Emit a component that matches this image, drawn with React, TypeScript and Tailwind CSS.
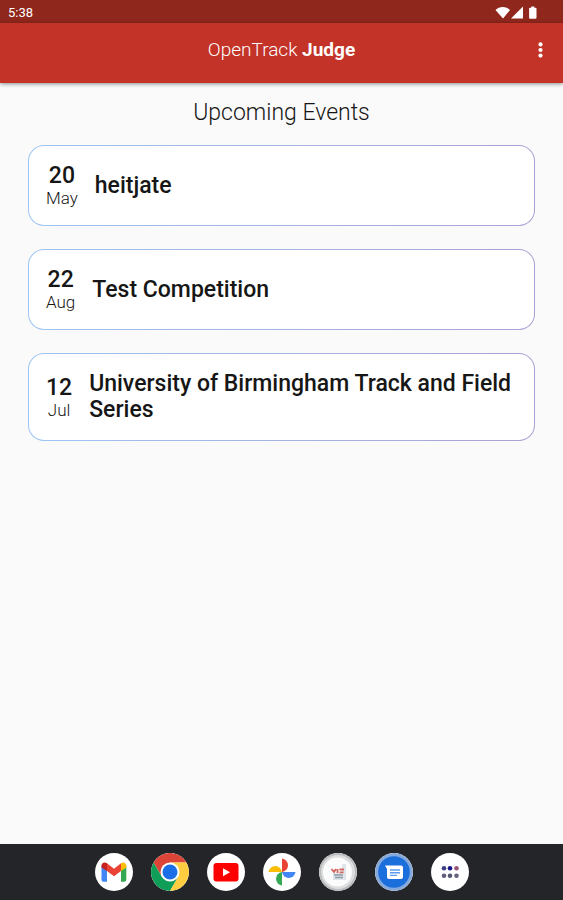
import React from "react";

type EventItem = {
  day: string;
  month: string;
  name: string;
};

const events: EventItem[] = [
  { day: "20", month: "May", name: "heitjate" },
  { day: "22", month: "Aug", name: "Test Competition" },
  { day: "12", month: "Jul", name: "University of Birmingham Track and Field Series" },
];

const StatusBar: React.FC = () => {
  return (
    <div className="flex h-[23px] items-center justify-between bg-[#8f271c] pt-0.5 pr-6 pl-2 text-white">
      <span className="text-[13px]">5:38</span>
      <svg width="44" height="14" viewBox="0 0 44 14" fill="currentColor" aria-hidden="true">
        <path d="M.5 4C4.3 0 11.2 0 15 4L8 12.5Z" />
        <path d="M28 .5V12.5H16Z" />
        <path d="M36.3 .5h3v1.2h1.3c.5 0 .9.4.9.9v9.2c0 .5-.4.9-.9.9H35c-.5 0-.9-.4-.9-.9V2.6c0-.5.4-.9.9-.9h1.3z" />
      </svg>
    </div>
  );
};

const Header: React.FC = () => {
  return (
    <header className="relative z-10 flex h-[60px] items-center justify-center bg-[#c33327] pb-1.5 text-white shadow-[0_1px_4px_rgba(0,0,0,0.45)]">
      <h1 className="text-[19px] font-light">
        OpenTrack <b className="font-bold">Judge</b>
      </h1>
      <button type="button" aria-label="More options" className="absolute right-4 cursor-pointer p-1">
        <svg width="5" height="16" viewBox="0 0 5 16" fill="currentColor">
          <circle cx="2.5" cy="2.4" r="2.1" />
          <circle cx="2.5" cy="8" r="2.1" />
          <circle cx="2.5" cy="13.6" r="2.1" />
        </svg>
      </button>
    </header>
  );
};

const EventCard: React.FC<{ event: EventItem }> = ({ event }) => {
  return (
    <li className="rounded-2xl bg-linear-to-r from-[#9cc5f4] to-[#aaa0d6] p-px">
      <div className="flex items-center gap-[17px] rounded-[15px] bg-white px-[17px] py-[15px]">
        <div className="flex flex-col items-center pt-1">
          <span className="text-[23px] leading-[22px] font-medium">{event.day}</span>
          <span className="text-[17px] leading-[23px] font-light">{event.month}</span>
        </div>
        <h3 className="py-0.5 text-[23px] leading-[26px] font-medium">{event.name}</h3>
      </div>
    </li>
  );
};

const GmailIcon = () => (
  <svg viewBox="0 0 38 38" className="size-full">
    <path fill="#4285f4" d="M6.5 12.5v14c0 1.4 1 2.3 2.3 2.3H12V17z" />
    <path fill="#34a853" d="M26 17v11.8h3c1.3 0 2.3-1 2.3-2.3v-14z" />
    <path fill="#c5221f" d="M6.5 12.5c0-2.8 3.300-3.800 5.500-2.300V18l-5.500-3.500z" />
    <path fill="#ea4335" d="M12 10.2l7 5.500 7-5.500V18l-7 5.300-7-5.300z" />
    <path fill="#fbbc04" d="M26 10.2c2.4-1.700 5.300-.2 5.300 2.500v2L26 18z" />
  </svg>
);

const ChromeIcon = () => (
  <svg viewBox="0 0 38 38" className="size-full">
    <path fill="#db4437" d="M2.5 9.5A19 19 0 0 1 35.5 9.5H19L10.8 23.8z" />
    <path fill="#0f9d58" d="M2.5 9.5A19 19 0 0 0 19 38l8.2-14.3H10.8z" />
    <path fill="#ffcd40" d="M35.5 9.5A19 19 0 0 1 19 38l8.2-14.3L19 9.5z" />
    <circle cx="19" cy="19" r="9.5" fill="#fff" />
    <circle cx="19" cy="19" r="7.5" fill="#1a6fe8" />
  </svg>
);

const YoutubeIcon = () => (
  <svg viewBox="0 0 38 38" className="size-full">
    <rect x="6.5" y="10" width="25" height="18.5" rx="3" fill="#f00" />
    <path fill="#fff" d="M16 15.2v8l7-4z" />
  </svg>
);

const PhotosIcon = () => (
  <svg viewBox="0 0 38 38" className="size-full">
    <path fill="#ea4335" d="M19 5.5a6.8 6.8 0 0 1 0 13.5z" />
    <path fill="#4285f4" d="M32.5 19a6.8 6.8 0 0 1-13.5 0z" />
    <path fill="#34a853" d="M19 32.5a6.8 6.8 0 0 1 0-13.5z" />
    <path fill="#fbbc04" d="M5.5 19a6.8 6.8 0 0 1 13.5 0z" />
  </svg>
);

const JudgeIcon = () => (
  <svg viewBox="0 0 38 38" className="size-full">
    <circle cx="19" cy="19" r="19" fill="#b9bbbd" />
    <circle cx="19" cy="19" r="17" fill="#dcdedf" />
    <circle cx="18.5" cy="19" r="14.5" fill="#fcfcfc" />
    <path fill="#dfe5e9" d="M14 20h9v-9h4v16H14z" />
    <path fill="none" stroke="#d4655e" strokeWidth="1.8" d="M12.5 16l2.5 3 2-3m1.500 0v4m2-3.500h4.500M20.500 19.300h4" />
    <path stroke="#8f9ba6" strokeWidth="1.5" d="M15 22h9M16 24.5h8" />
  </svg>
);

const MessagesIcon = () => (
  <svg viewBox="0 0 38 38" className="size-full">
    <circle cx="19" cy="19" r="19" fill="#86a9dc" />
    <circle cx="19" cy="19" r="15.8" fill="#1a6fdc" />
    <path fill="#fff" d="M10 12.5h16a2 2 0 0 1 2 2V24a2 2 0 0 1-2 2H14a2 2 0 0 1-2-2v-8z" />
    <path stroke="#5b9af0" strokeWidth="1.4" d="M15 17h10M15 19.7h10M15 22.4h7" />
  </svg>
);

const AppsIcon = () => (
  <svg viewBox="0 0 38 38" className="size-full">
    <circle cx="13" cy="15.2" r="2.3" fill="#3b3f86" />
    <circle cx="19" cy="15.2" r="2.3" fill="#16168c" />
    <circle cx="25.5" cy="15.2" r="2.3" fill="#9a5575" />
    <circle cx="13" cy="22.7" r="2.3" fill="#5f5d7c" />
    <circle cx="19" cy="22.7" r="2.3" fill="#55566f" />
    <circle cx="25.5" cy="22.7" r="2.3" fill="#68627f" />
  </svg>
);

const apps = [
  { label: "Gmail", Icon: GmailIcon },
  { label: "Chrome", Icon: ChromeIcon },
  { label: "YouTube", Icon: YoutubeIcon },
  { label: "Photos", Icon: PhotosIcon },
  { label: "Judge", Icon: JudgeIcon },
  { label: "Messages", Icon: MessagesIcon },
  { label: "All apps", Icon: AppsIcon },
];

const Dock: React.FC = () => {
  return (
    <nav className="flex h-14 items-center justify-center gap-[18px] bg-[#242529]">
      {apps.map(({ label, Icon }) => (
        <button
          key={label}
          type="button"
          aria-label={label}
          className="size-[38px] cursor-pointer overflow-hidden rounded-full bg-white"
        >
          <Icon />
        </button>
      ))}
    </nav>
  );
};

export default function App() {
  return (
    <div className="flex min-h-screen flex-col bg-[#fafafa] font-[Roboto,sans-serif] text-[#161616]">
      <StatusBar />
      <Header />
      <main className="flex-1 px-7 pt-4">
        <h2 className="text-center text-[23px] leading-7 font-light">Upcoming Events</h2>
        <ul className="mt-[18px] flex flex-col gap-[23px]">
          {events.map((event) => (
            <EventCard key={event.name} event={event} />
          ))}
        </ul>
      </main>
      <Dock />
    </div>
  );
}
